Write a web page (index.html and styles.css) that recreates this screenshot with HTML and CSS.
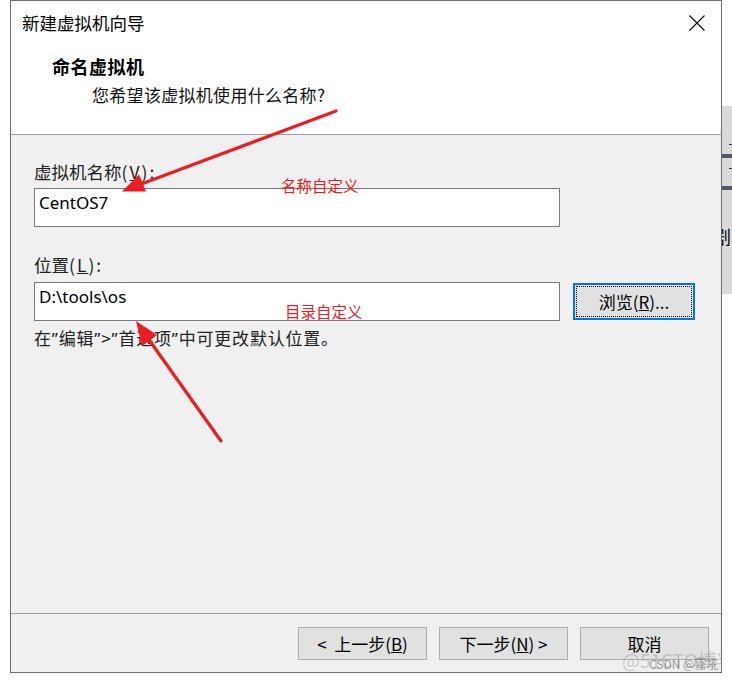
FILE: index.html
```html
<!DOCTYPE html>
<html lang="zh-CN">
<head>
<meta charset="utf-8">
<title>新建虚拟机向导</title>
<link rel="stylesheet" href="styles.css">
</head>
<body>
<div class="desktop">
  <div class="dialog">
    <div class="header">
      <div class="titlebar">
        <span class="title">新建虚拟机向导</span>
        <svg class="close" width="16" height="16" viewBox="0 0 16 16"><path d="M0.5 0.5 L15.5 15.5 M15.5 0.5 L0.5 15.5" stroke="#000" stroke-width="1.1" fill="none"/></svg>
      </div>
      <div class="heading">命名虚拟机</div>
      <div class="subheading">您希望该虚拟机使用什么名称?</div>
    </div>
    <div class="content">
      <div class="label">虚拟机名称<span class="ak">(<u>V</u>):</span></div>
      <div class="field-row">
        <div class="input">CentOS7</div>
      </div>
      <div class="label label-2">位置<span class="ak">(<u>L</u>):</span></div>
      <div class="field-row">
        <div class="input">D:\tools\os</div>
        <div class="browse"><span class="browse-inner">浏览(<u>R</u>)...</span></div>
      </div>
      <div class="hint">在<span class="q">”</span>编辑<span class="q">”</span>&gt;<span class="q">”</span>首选项<span class="q">”</span>中可更改默认位置。</div>
    </div>
    <div class="footer">
      <div class="btn">&lt;&nbsp; 上一步(<u>B</u>)</div>
      <div class="btn">下一步(<u>N</u>) &gt;</div>
      <div class="btn">取消</div>
    </div>
  </div>

  <div class="bg-window">
    <div class="bg-tick"></div>
    <div class="bg-bar"></div>
    <div class="bg-tick bg-tick-2"></div>
    <div class="bg-bar bg-bar-2"></div>
    <div class="bg-glyph">剧</div>
  </div>

  <svg class="annot" width="732" height="683" viewBox="0 0 732 683">
    <line x1="336" y1="111" x2="140" y2="184.5" stroke="#ec1c24" stroke-width="3.2" stroke-linecap="round"/>
    <polygon points="122,191.5 146,191.5 139,174.5" fill="#ec1c24"/>
    <line x1="221" y1="441" x2="147" y2="337" stroke="#ec1c24" stroke-width="3.2" stroke-linecap="round"/>
    <polygon points="136,321 157,335 142,346" fill="#ec1c24"/>
  </svg>
  <div class="note note-1">名称自定义</div>
  <div class="note note-2">目录自定义</div>
  <div class="watermark"><span class="wm-a">@51CTO博客</span><span class="wm-b">CSDN @霧埖</span></div>
</div>
</body>
</html>
```

FILE: styles.css
```css
* { box-sizing: border-box; }
html, body { margin: 0; padding: 0; background: #ffffff; }
body {
  font-family: "Noto Sans CJK SC", "Noto Sans", sans-serif;
  color: #000;
  width: 732px;
  height: 683px;
  overflow: hidden;
}
.desktop { position: relative; width: 732px; height: 683px; }

.dialog {
  margin-left: 10px;
  width: 712px;
  height: 673px;
  border: 1px solid #6e6e6e;
  background: #f0f0f0;
  display: flex;
  flex-direction: column;
}

.header {
  background: #fff;
  height: 134px;
  border-bottom: 1px solid #a0a0a0;
  flex: none;
}
.titlebar {
  height: 43px;
  display: flex;
  align-items: center;
  justify-content: space-between;
  padding-left: 11px;
  padding-right: 16px;
}
.title { font-size: 17.5px; line-height: 24px; }
.close { display: block; }

.heading {
  margin-top: 10px;
  padding-left: 41px;
  font-size: 18px;
  font-weight: 700;
  line-height: 24px;
  letter-spacing: 0.5px;
}
.subheading {
  margin-top: 5px;
  padding-left: 81px;
  font-size: 17px;
  line-height: 24px;
  color: #111;
  letter-spacing: 0.3px;
}

.content {
  flex: 1;
  padding: 25px 0 0 23px;
}
.label {
  font-size: 17.5px;
  line-height: 24px;
  color: #222;
}
.ak { letter-spacing: 2px; }
.label-2 { margin-top: 26px; }
.field-row {
  display: flex;
  align-items: center;
  margin-top: 4px;
}
.label-2 + .field-row { margin-top: 5px; }
.input {
  width: 526px;
  height: 39px;
  border: 1px solid #7a7a7a;
  background: #fff;
  padding: 2px 0 0 4px;
  font-family: "Noto Sans", "Noto Sans CJK SC", sans-serif;
  font-size: 17px;
  line-height: 24px;
}
.browse {
  margin-left: 13px;
  width: 122px;
  height: 37px;
  border: 2px solid #0078d7;
  background: #e1e1e1;
  padding: 1px;
}
.browse-inner {
  display: flex;
  height: 100%;
  align-items: center;
  justify-content: center;
  border: 1px dotted #000;
  font-size: 17px;
  line-height: 24px;
}
.hint {
  margin-top: 5px;
  font-size: 17px;
  line-height: 24px;
  color: #222;
  letter-spacing: 0.8px;
}
.q { font-family: "Noto Sans", sans-serif; }

.footer {
  flex: none;
  height: 59px;
  border-top: 1px solid #a0a0a0;
  display: flex;
  justify-content: flex-end;
  align-items: flex-start;
  gap: 12px;
  padding: 13px 12px 0 0;
}
.btn {
  width: 129px;
  height: 33px;
  border: 1px solid #adadad;
  background: #e1e1e1;
  display: flex;
  align-items: center;
  justify-content: center;
  font-size: 17px;
  line-height: 24px;
}

/* background window peeking at the right edge */
.bg-window {
  position: absolute;
  left: 722px;
  top: 106px;
  width: 10px;
  height: 188px;
  background: #dadada;
  overflow: hidden;
}
.bg-bar {
  position: absolute;
  left: 0; right: 0;
  top: 48px;
  height: 4px;
  background: #4f5a63;
}
.bg-bar-2 { top: 80px; }
.bg-tick {
  position: absolute;
  left: 7px;
  top: 38px;
  width: 3px;
  height: 1px;
  background: #333;
}
.bg-tick-2 { top: 62px; }
.bg-glyph {
  position: absolute;
  left: -9px;
  top: 118px;
  font-size: 18px;
  line-height: 24px;
  color: #000;
}

.annot { position: absolute; left: 0; top: 0; pointer-events: none; }
.note {
  position: absolute;
  font-size: 15.5px;
  line-height: 20px;
  color: #ec1c24;
}
.note-1 { left: 281px; top: 175px; }
.note-2 { left: 285px; top: 301px; }

.watermark {
  position: absolute;
  left: 622px;
  top: 648px;
  width: 100px;
  height: 25px;
  overflow: hidden;
}
.wm-a {
  position: absolute;
  left: 0; top: 0;
  font-size: 19px;
  line-height: 24px;
  color: rgba(150,150,150,0.45);
  white-space: nowrap;
}
.wm-b {
  position: absolute;
  left: 27px; top: 8px;
  font-size: 12px;
  line-height: 16px;
  color: rgba(90,90,90,0.6);
  white-space: nowrap;
}
```
